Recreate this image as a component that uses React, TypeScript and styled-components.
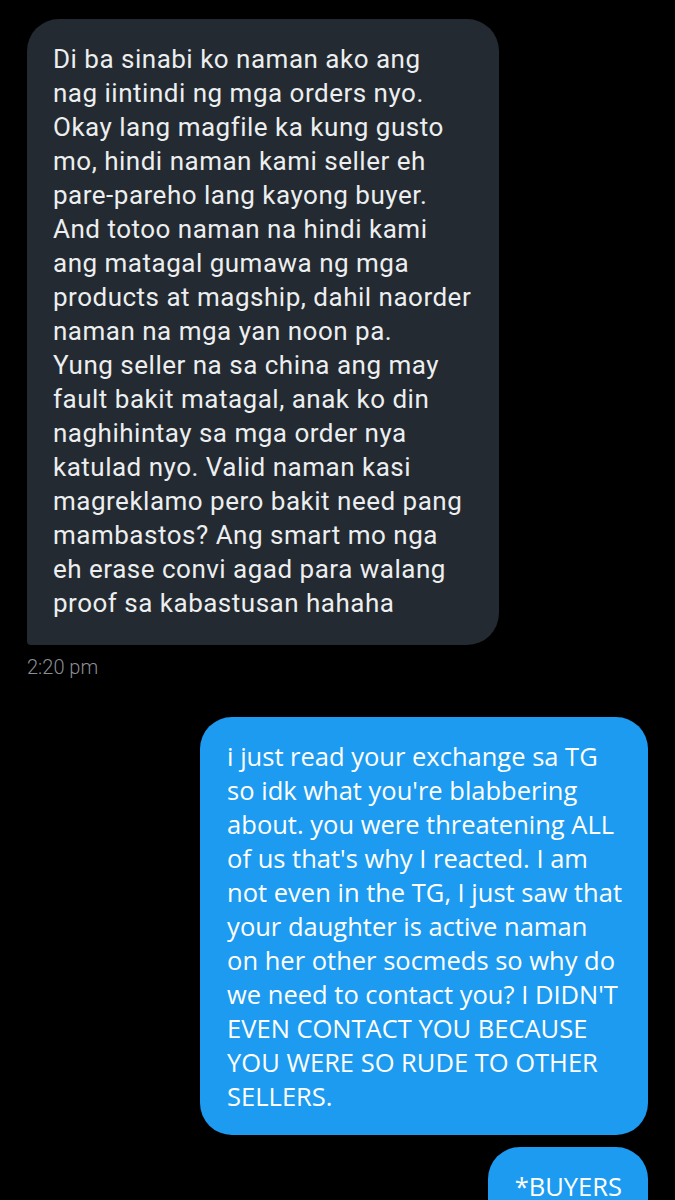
import React from "react";
import styled, { createGlobalStyle } from "styled-components";

const Global = createGlobalStyle`
  html, body {
    margin: 0;
    padding: 0;
    background: #000;
  }
  body {
    overflow: hidden;
  }
`;

const Screen = styled.div`
  width: 675px;
  height: 1200px;
  background: #000;
  box-sizing: border-box;
  padding: 19px 27px 0 27px;
  display: flex;
  flex-direction: column;
  overflow: hidden;
`;

const Row = styled.div<{ $mine?: boolean }>`
  display: flex;
  justify-content: ${(p) => (p.$mine ? "flex-end" : "flex-start")};
`;

const Bubble = styled.div<{ $mine?: boolean; $tail?: boolean }>`
  box-sizing: border-box;
  white-space: pre;
  color: ${(p) => (p.$mine ? "#ffffff" : "#eceeef")};
  background: ${(p) => (p.$mine ? "#1d9bf0" : "#232a31")};
  border-radius: ${(p) =>
    p.$mine ? "32px" : p.$tail ? "32px 32px 32px 4px" : "32px"};
  font-family: ${(p) =>
    p.$mine ? '"Open Sans", "Liberation Sans", sans-serif' : 'Roboto, "Liberation Sans", sans-serif'};
  font-size: ${(p) => (p.$mine ? "25.5px" : "26px")};
  letter-spacing: ${(p) => (p.$mine ? "0" : "0.5px")};
  line-height: 34px;
  padding: ${(p) => (p.$mine ? "22px 26px 22px 27px" : "23px 28px 25px 26px")};
`;

const Time = styled.div`
  font-family: Roboto, "Liberation Sans", sans-serif;
  font-weight: 300;
  font-size: 20px;
  color: #8b8e92;
  margin-top: 9px;
  margin-left: 0;
  line-height: 26px;
`;

const Gap = styled.div<{ $h: number }>`
  height: ${(p) => p.$h}px;
  flex-shrink: 0;
`;

const received = [
  "Di ba sinabi ko naman ako ang",
  "nag iintindi ng mga orders nyo.",
  "Okay lang magfile ka kung gusto",
  "mo, hindi naman kami seller eh",
  "pare-pareho lang kayong buyer.",
  "And totoo naman na hindi kami",
  "ang matagal gumawa ng mga",
  "products at magship, dahil naorder",
  "naman na mga yan noon pa.",
  "Yung seller na sa china ang may",
  "fault bakit matagal, anak ko din",
  "naghihintay sa mga order nya",
  "katulad nyo. Valid naman kasi",
  "magreklamo pero bakit need pang",
  "mambastos? Ang smart mo nga",
  "eh erase convi agad para walang",
  "proof sa kabastusan hahaha",
].join("\n");

const sent = [
  "i just read your exchange sa TG",
  "so idk what you're blabbering",
  "about. you were threatening ALL",
  "of us that's why I reacted. I am",
  "not even in the TG, I just saw that",
  "your daughter is active naman",
  "on her other socmeds so why do",
  "we need to contact you? I DIDN'T",
  "EVEN CONTACT YOU BECAUSE",
  "YOU WERE SO RUDE TO OTHER",
  "SELLERS.",
].join("\n");

export default function App() {
  return (
    <>
      <Global />
      <Screen>
        <Row>
          <Bubble $tail>{received}</Bubble>
        </Row>
        <Time>2:20 pm</Time>
        <Gap $h={37} />
        <Row $mine>
          <Bubble $mine>{sent}</Bubble>
        </Row>
        <Gap $h={12} />
        <Row $mine>
          <Bubble $mine>{"*BUYERS\n "}</Bubble>
        </Row>
      </Screen>
    </>
  );
}
